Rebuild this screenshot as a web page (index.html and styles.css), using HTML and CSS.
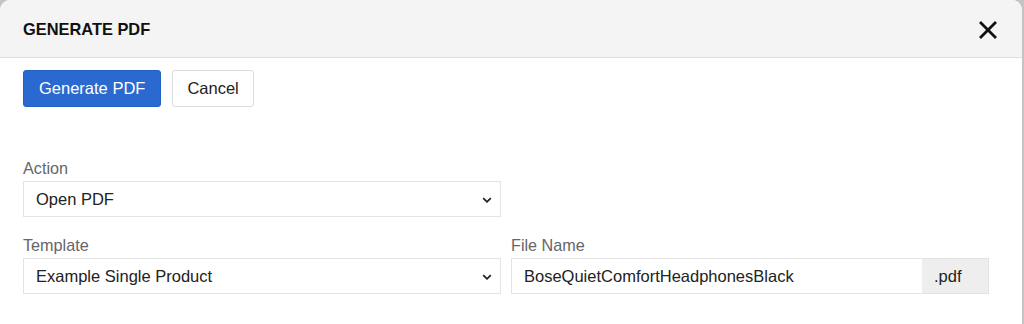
FILE: index.html
```html
<!DOCTYPE html>
<html lang="en">
<head>
<meta charset="utf-8">
<title>Generate PDF</title>
<link rel="stylesheet" href="styles.css">
</head>
<body>
<div class="dialog">
  <header class="dialog-header">
    <h1 class="dialog-title">GENERATE PDF</h1>
    <button class="close" aria-label="Close">
      <svg width="18" height="18" viewBox="0 0 18 18"><path d="M2 2L16 16M16 2L2 16" stroke="#111" stroke-width="2.8" stroke-linecap="square"/></svg>
    </button>
  </header>
  <div class="dialog-body">
    <div class="actions">
      <button class="btn btn-primary">Generate PDF</button>
      <button class="btn btn-default">Cancel</button>
    </div>
    <div class="form">
      <div class="field field-half">
        <label class="label">Action</label>
        <div class="select">
          <span>Open PDF</span>
          <svg class="chev" width="10" height="6" viewBox="0 0 10 6"><path d="M1.2 1.2L5 4.8L8.8 1.2" fill="none" stroke="#222" stroke-width="1.8"/></svg>
        </div>
      </div>
      <div class="row">
        <div class="field">
          <label class="label">Template</label>
          <div class="select">
            <span>Example Single Product</span>
            <svg class="chev" width="10" height="6" viewBox="0 0 10 6"><path d="M1.2 1.2L5 4.8L8.8 1.2" fill="none" stroke="#222" stroke-width="1.8"/></svg>
          </div>
        </div>
        <div class="field">
          <label class="label">File Name</label>
          <div class="input-group">
            <div class="input">BoseQuietComfortHeadphonesBlack</div>
            <div class="addon">.pdf</div>
          </div>
        </div>
      </div>
    </div>
  </div>
</div>
</body>
</html>
```
FILE: styles.css
```css
* { box-sizing: border-box; }
html, body { margin: 0; padding: 0; }
body {
  background: #c4c4c4;
  font-family: "Liberation Sans", Arial, sans-serif;
  color: #222;
  height: 324px;
  overflow: hidden;
}
.dialog {
  margin-right: 2px;
  height: 324px;
  background: #fff;
  border-radius: 10px 10px 0 0;
  overflow: hidden;
}
.dialog-header {
  height: 58px;
  background: #f4f4f4;
  border-bottom: 1px solid #e0e0e0;
  display: flex;
  align-items: center;
  justify-content: space-between;
  padding: 0 25px 0 23px;
}
.dialog-title {
  margin: 0;
  font-size: 16.4px;
  font-weight: bold;
  color: #111;
  padding-top: 1px;
}
.close {
  border: 0;
  background: none;
  padding: 0;
  display: flex;
  margin-top: 3px;
}
.dialog-body {
  padding: 12px 33px 0 23px;
}
.actions {
  display: flex;
  gap: 11px;
}
.btn {
  height: 37px;
  font-family: "Liberation Sans", Arial, sans-serif;
  font-size: 16.5px;
  padding: 0 15px;
  border-radius: 3px;
  line-height: 35px;
}
.btn-primary {
  background: #2a69cf;
  border: 1px solid #2260c2;
  color: #fff;
}
.btn-default {
  background: #fff;
  border: 1px solid #dcdcdc;
  color: #222;
  padding: 0 14px;
}
.form {
  margin-top: 51px;
  width: 966px;
}
.field-half { width: 478px; }
.row {
  display: grid;
  grid-template-columns: 1fr 1fr;
  gap: 10px;
  margin-top: 18px;
}
.label {
  display: block;
  font-size: 16.2px;
  line-height: 20px;
  color: #666;
  margin-bottom: 3px;
}
.select, .input-group {
  height: 36px;
  border: 1px solid #e4e4e4;
  display: flex;
  align-items: center;
  font-size: 16.5px;
  color: #222;
}
.select {
  justify-content: space-between;
  padding: 1px 8px 0 12px;
}
.chev { margin-top: 1px; }
.input-group { padding: 0; }
.input {
  flex: 1;
  padding: 1px 12px 0;
  height: 100%;
  display: flex;
  align-items: center;
}
.addon {
  width: 66px;
  height: 100%;
  background: #eeeeee;
  padding: 1px 12px 0;
  display: flex;
  align-items: center;
}
```
